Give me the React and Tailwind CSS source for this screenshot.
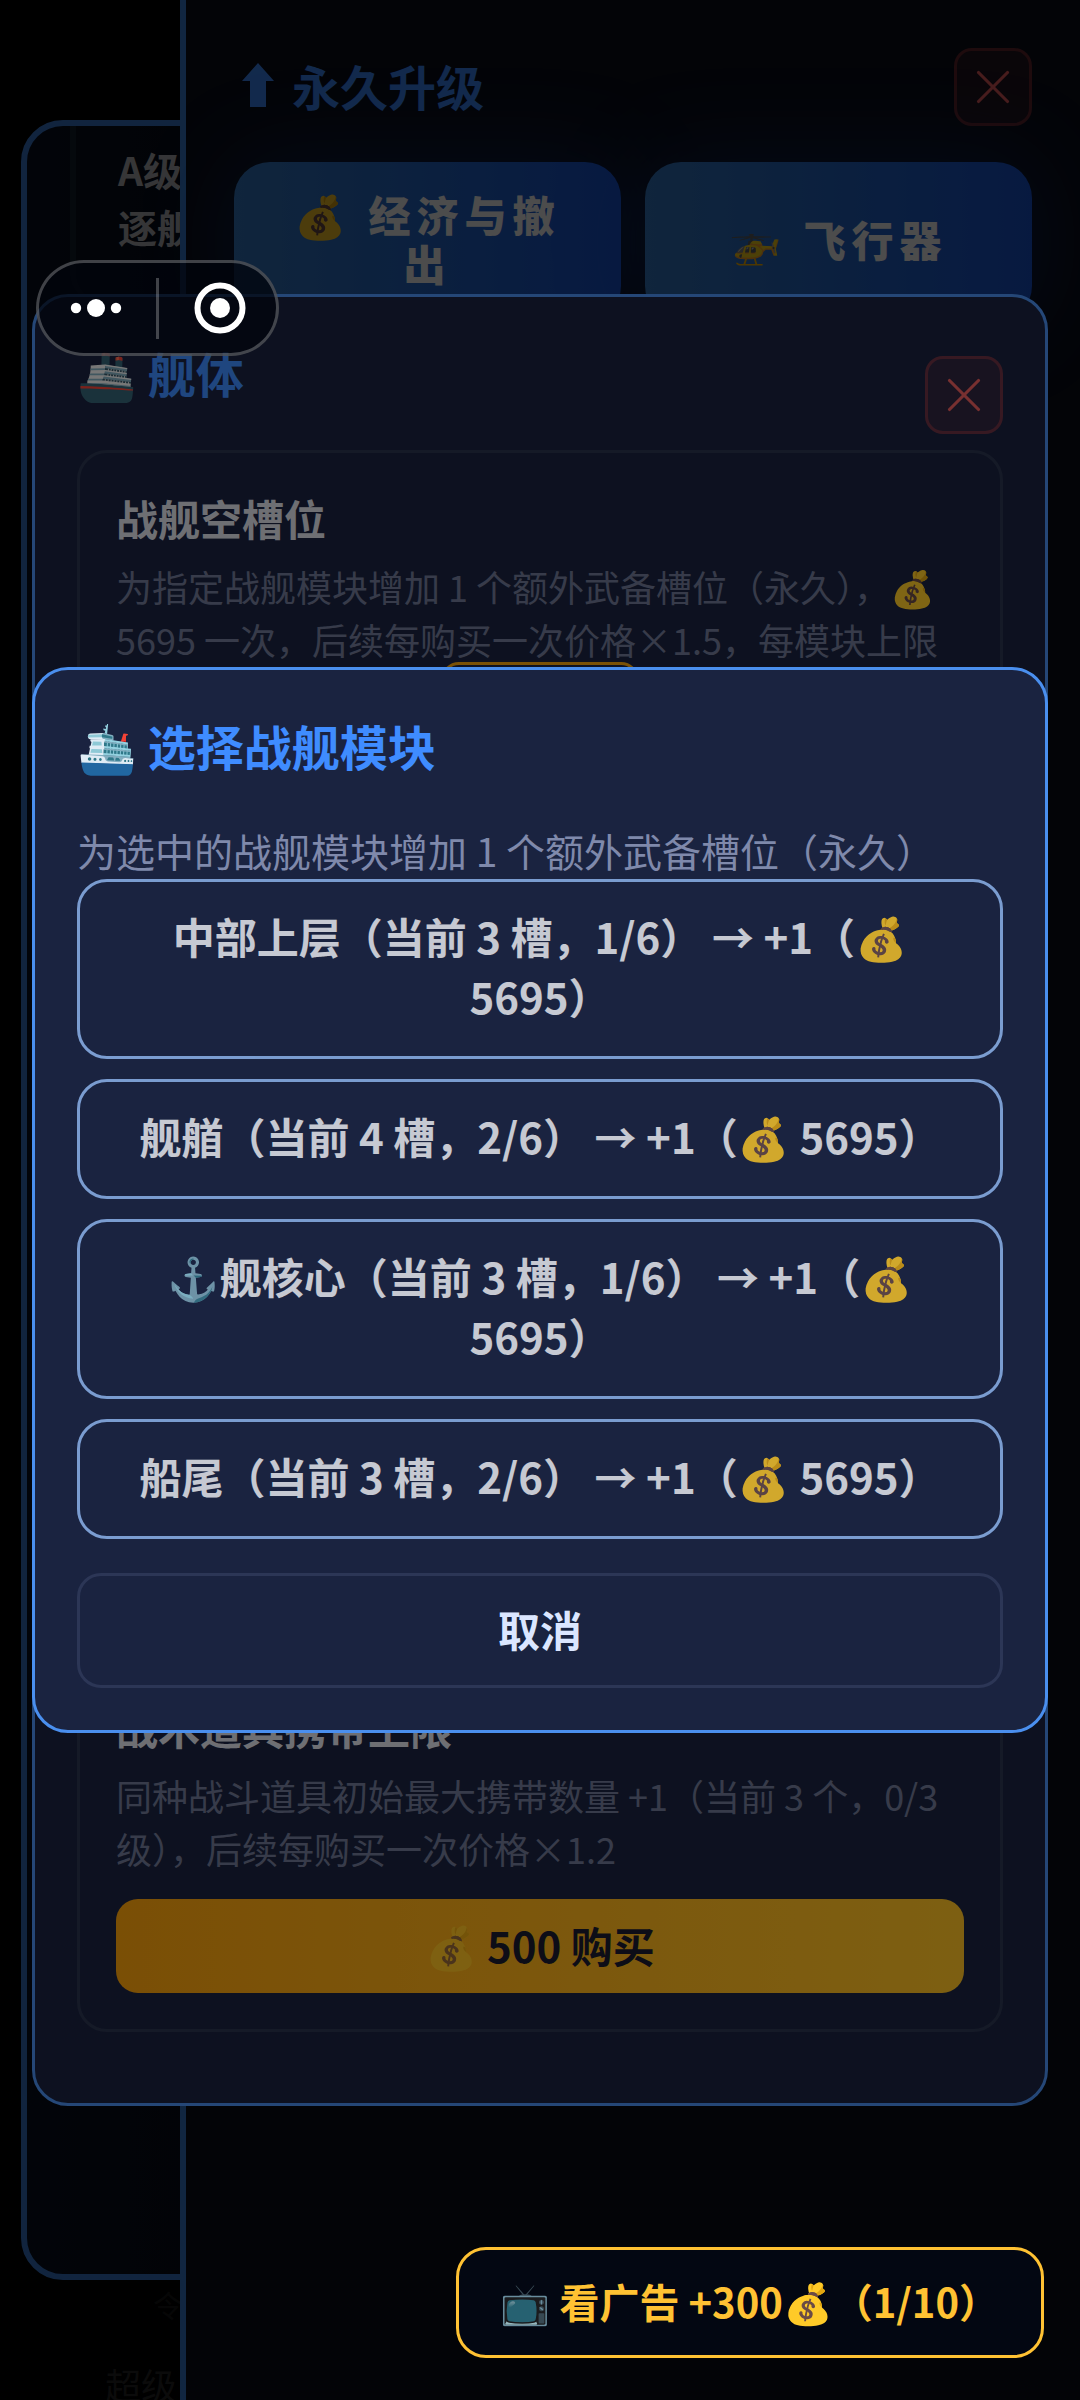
import { X } from 'lucide-react';

const modules = [
  { name: '中部上层', slots: 3, used: '1/6', price: 5695 },
  { name: '舰艏', slots: 4, used: '2/6', price: 5695 },
  { name: '⚓舰核心', slots: 3, used: '1/6', price: 5695 },
  { name: '船尾', slots: 3, used: '2/6', price: 5695 },
];

const tabs = ['💰 经济与撤出', '🚁 飞行器'];

function CloseButton({ className = '' }) {
  return (
    <button
      type="button"
      aria-label="关闭"
      className={`flex size-[78px] shrink-0 items-center justify-center rounded-[18px] border-3 border-[#ff5050]/30 bg-[#ff5050]/10 text-[#f06060] ${className}`}
    >
      <X size={58} strokeWidth={1.3} />
    </button>
  );
}

function ArrowUp() {
  return (
    <svg width="32" height="44" viewBox="0 0 32 44" fill="currentColor" aria-hidden="true">
      <path d="M16 0 32 18H24V44H8V18H0Z" />
    </svg>
  );
}

/* Ship list, mostly hidden behind the upgrade drawer */
function ShipList() {
  return (
    <aside className="absolute inset-y-[120px] left-[21px] w-1/2 overflow-hidden rounded-[42px] border-6 border-[#3a7ad0] bg-linear-to-r from-[#08101f] to-[#04060c]">
      <div className="ml-[43px] rounded-b-[30px] border-x-6 border-b-3 border-[#12202e] px-[42px] pt-[15px] pb-[45px]">
        <p className="text-[39px] leading-[57px] font-bold text-[#b4b4b8]">
          A级
          <br />
          逐舰
        </p>
      </div>
    </aside>
  );
}

function UpgradeDrawer() {
  return (
    <section className="absolute inset-y-0 right-0 left-[180px] border-l-6 border-[#3a80d8] bg-[#0a0e1a] p-12">
      <header className="mb-9 flex items-center justify-between">
        <h1 className="flex items-center gap-[18px] pb-1 pl-2 text-5xl font-bold text-[#3f8cff]">
          <ArrowUp />
          永久升级
        </h1>
        <CloseButton />
      </header>
      <div className="grid grid-cols-2 gap-6">
        {tabs.map((tab) => (
          <button
            key={tab}
            type="button"
            className="min-h-40 rounded-[36px] bg-linear-to-r from-[#367cc8] to-[#1a56d8] px-[42px] pb-2 text-[42px] leading-[49px] font-black tracking-[6px] text-white shadow-[0_0_90px_rgba(26,86,216,0.3)]"
          >
            {tab}
          </button>
        ))}
      </div>
    </section>
  );
}

function UpgradeCard({ title, desc, children }) {
  return (
    <article className="relative rounded-[30px] border-3 border-white/8 p-9">
      <h3 className="mb-[14px] text-[42px] leading-[57px] font-bold text-[#dcdfe6]">{title}</h3>
      <p className="text-4xl leading-[53px] text-[#6f7794]">{desc}</p>
      {children}
    </article>
  );
}

function HullModal() {
  return (
    <div className="absolute inset-0 flex items-center justify-center bg-black/40 px-8">
      <section className="flex h-[75.5%] w-full flex-col rounded-[36px] border-3 border-[#4a8fee] bg-[#1a2340] px-[42px] pt-[42px] pb-[71px]">
        <header className="mb-4 flex items-start justify-between">
          <h2 className="text-5xl leading-[66px] font-bold text-[#3f8cff]">🚢 舰体</h2>
          <CloseButton className="mt-[17px]" />
        </header>
        <div className="flex flex-1 flex-col justify-between">
          <UpgradeCard
            title="战舰空槽位"
            desc="为指定战舰模块增加 1 个额外武备槽位（永久），💰 5695 一次，后续每购买一次价格×1.5，每模块上限"
          >
            <div className="absolute top-[209px] left-1/2 h-12 w-[198px] -translate-x-1/2 rounded-[18px] border-3 border-[#f5a30b]" />
          </UpgradeCard>
          <UpgradeCard
            title="战术道具携带上限"
            desc="同种战斗道具初始最大携带数量 +1（当前 3 个，0/3 级），后续每购买一次价格×1.2"
          >
            <button
              type="button"
              className="mt-6 h-[94px] w-full rounded-[22px] bg-linear-to-r from-[#f59e0b] to-[#fbbf24] pb-1 text-[42px] font-bold text-[#1a1a2e]"
            >
              <span className="opacity-70">💰</span> 500 购买
            </button>
          </UpgradeCard>
        </div>
      </section>
    </div>
  );
}

function ModuleDialog() {
  return (
    <div className="absolute inset-0 flex items-center justify-center bg-black/50 px-8">
      <section
        role="dialog"
        aria-labelledby="module-title"
        className="w-full rounded-[36px] border-3 border-[#4a8fee] bg-[#1a2340] p-[42px]"
      >
        <h2 id="module-title" className="mb-12 text-5xl leading-[66px] font-bold text-[#3f8cff]">
          🛳️ 选择战舰模块
        </h2>
        <p className="mb-1 text-[39px] leading-[49px] text-[#7f89ab]">
          为选中的战舰模块增加 1 个额外武备槽位（永久）
        </p>
        <div className="flex flex-col gap-5">
          {modules.map((m) => (
            <button
              key={m.name}
              type="button"
              className="w-full rounded-[30px] border-3 border-[#93bbf5] px-12 pt-6 pb-[30px] text-[42px] leading-[60px] font-bold text-[#f2f3f7] opacity-80"
            >
              {`${m.name}（当前 ${m.slots} 槽，${m.used}） → +1（💰 ${m.price}）`}
            </button>
          ))}
        </div>
        <button
          type="button"
          className="mt-[34px] h-[115px] w-full rounded-[24px] border-3 border-[#2c3656] pb-1 text-[42px] font-bold text-[#dbe6ff]"
        >
          取消
        </button>
      </section>
    </div>
  );
}

/* Host app capsule: more / exit */
function Capsule() {
  return (
    <nav className="absolute top-[260px] left-9 flex h-24 w-[243px] items-center rounded-full border-3 border-white/25 bg-[#02040c]/75 text-white">
      <button type="button" aria-label="更多" className="flex flex-1 justify-center pr-1">
        <svg width="52" height="20" viewBox="0 0 52 20" fill="currentColor">
          <circle cx="6" cy="10" r="5.2" />
          <circle cx="26" cy="10" r="9" />
          <circle cx="46" cy="10" r="5.2" />
        </svg>
      </button>
      <span className="h-[61px] w-[3px] bg-white/25" />
      <button type="button" aria-label="退出" className="flex flex-1 justify-center pl-1">
        <svg width="52" height="52" viewBox="0 0 52 52" fill="none">
          <circle cx="26" cy="26" r="22.5" stroke="currentColor" strokeWidth="6" />
          <circle cx="26" cy="26" r="10" fill="currentColor" />
        </svg>
      </button>
    </nav>
  );
}

export default function App() {
  return (
    <main
      lang="zh-CN"
      className="relative flex min-h-screen flex-col justify-end overflow-hidden bg-black font-['Noto_Sans_CJK_SC','Noto_Color_Emoji',sans-serif]"
    >
      <div className="flex flex-col gap-12 pl-[105px] leading-8 text-[#262626]">
        <p className="pl-12 text-3xl leading-8 text-[#161616]">令</p>
        <p className="text-4xl leading-8">超级</p>
      </div>
      <ShipList />
      <UpgradeDrawer />
      <HullModal />
      <ModuleDialog />
      <Capsule />
      <button
        type="button"
        className="absolute right-9 bottom-[42px] h-[111px] rounded-[30px] border-3 border-[#ffc233] bg-[#030712] px-[42px] pb-1 text-[40px] font-bold text-[#ffc233]"
      >
        <span className="opacity-80">📺</span> 看广告 +300💰（1/10）
      </button>
    </main>
  );
}
